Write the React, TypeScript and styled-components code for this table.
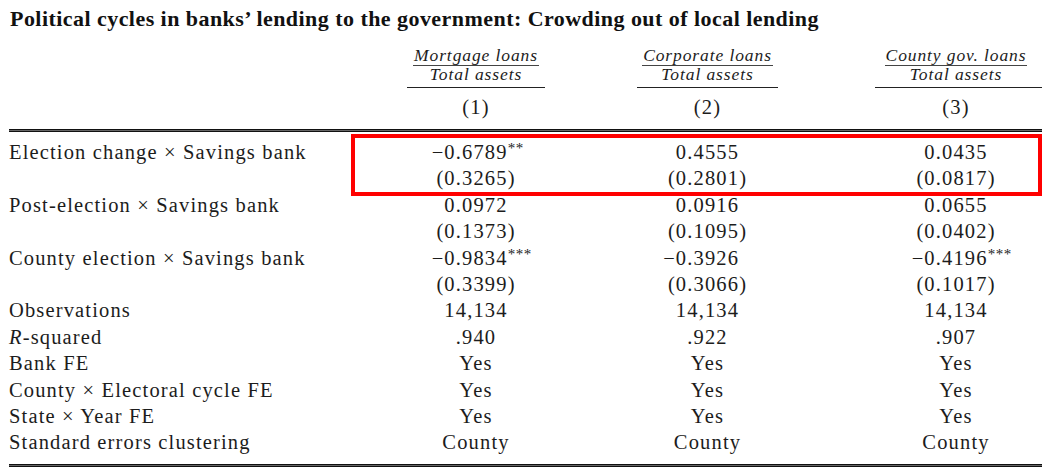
import React from "react";
import styled, { createGlobalStyle } from "styled-components";

const Global = createGlobalStyle`
  html, body { margin: 0; padding: 0; background: #ffffff; }
  body { font-family: "Liberation Serif", "Times New Roman", serif; color: #1c1c1c; }
`;

const Page = styled.div`
  width: 1051px;
  height: 472px;
  box-sizing: border-box;
  padding: 0 9px;
  overflow: hidden;
`;

const Title = styled.h1`
  margin: 6px 0 0 1px;
  font-size: 22px;
  line-height: 26px;
  font-weight: bold;
  letter-spacing: 0.45px;
  white-space: nowrap;
  color: #111;
`;

const Grid = styled.div`
  display: grid;
  grid-template-columns: 306px 138px 141px 172px;
  column-gap: 92px;
`;

const HeadGrid = styled(Grid)`
  margin-top: 13px;
`;

const HeadCell = styled.div`
  display: flex;
  flex-direction: column;
  align-items: center;
`;

const Fraction = styled.div`
  display: flex;
  flex-direction: column;
  align-items: stretch;
  font-style: italic;
  font-size: 17.5px;
  letter-spacing: 0.9px;
  text-align: center;
  white-space: nowrap;
`;

const Numer = styled.span`
  line-height: 20px;
  border-bottom: 1.5px solid #444;
  padding: 0 1px;
`;

const Denom = styled.span`
  line-height: 17px;
`;

const CMidRule = styled.div<{ $trim?: number }>`
  align-self: stretch;
  margin-top: 4px;
  margin-left: ${(p) => p.$trim ?? 0}px;
  height: 1px;
  background: #222;
`;

const ColNum = styled.div`
  margin-top: 7px;
  font-size: 20.5px;
  line-height: 24px;
  letter-spacing: 1.2px;
`;

const HeavyRule = styled.div<{ $top: number }>`
  margin-top: ${(p) => p.$top}px;
  height: 1px;
  border-top: 1px solid #111;
  border-bottom: 1px solid #111;
  background: #666;
`;

const BodyWrap = styled.div`
  position: relative;
  margin-top: 7px;
`;

const BodyGrid = styled(Grid)`
  grid-auto-rows: 26.4px;
  font-size: 20.5px;
  line-height: 26.4px;
  letter-spacing: 1.15px;
`;

const Label = styled.div`
  white-space: nowrap;
`;

const Val = styled.div`
  display: grid;
  grid-template-columns: 1fr auto 1fr;
  white-space: nowrap;
`;

const Pre = styled.span`
  text-align: right;
`;

const Stars = styled.span`
  align-self: start;
  text-align: left;
  font-size: 15px;
  line-height: 19px;
  letter-spacing: 0.5px;
`;

const Highlight = styled.div`
  position: absolute;
  left: 342px;
  top: -5px;
  width: 691px;
  height: 62px;
  box-sizing: border-box;
  border: 4px solid #ff0000;
  pointer-events: none;
`;

type Cell = { v: string; neg?: boolean; s?: string };
type Row = { label: React.ReactNode; cells: Cell[] };

const n = (v: string, neg = false, s = ""): Cell => ({ v, neg, s });

const rows: Row[] = [
  { label: "Election change \u00d7 Savings bank", cells: [n("0.6789", true, "**"), n("0.4555"), n("0.0435")] },
  { label: "", cells: [n("(0.3265)"), n("(0.2801)"), n("(0.0817)")] },
  { label: "Post-election \u00d7 Savings bank", cells: [n("0.0972"), n("0.0916"), n("0.0655")] },
  { label: "", cells: [n("(0.1373)"), n("(0.1095)"), n("(0.0402)")] },
  { label: "County election \u00d7 Savings bank", cells: [n("0.9834", true, "***"), n("0.3926", true), n("0.4196", true, "***")] },
  { label: "", cells: [n("(0.3399)"), n("(0.3066)"), n("(0.1017)")] },
  { label: "Observations", cells: [n("14,134"), n("14,134"), n("14,134")] },
  { label: <><i>R</i>-squared</>, cells: [n(".940"), n(".922"), n(".907")] },
  { label: "Bank FE", cells: [n("Yes"), n("Yes"), n("Yes")] },
  { label: "County \u00d7 Electoral cycle FE", cells: [n("Yes"), n("Yes"), n("Yes")] },
  { label: "State \u00d7 Year FE", cells: [n("Yes"), n("Yes"), n("Yes")] },
  { label: "Standard errors clustering", cells: [n("County"), n("County"), n("County")] },
];

const heads = [
  { top: "Mortgage loans", idx: "(1)", trim: 0 },
  { top: "Corporate loans", idx: "(2)", trim: 0 },
  { top: "County gov. loans", idx: "(3)", trim: 5 },
];

export default function App() {
  return (
    <>
      <Global />
      <Page>
        <Title>Political cycles in banks’ lending to the government: Crowding out of local lending</Title>
        <HeadGrid>
          <div />
          {heads.map((h) => (
            <HeadCell key={h.idx}>
              <Fraction>
                <Numer>{h.top}</Numer>
                <Denom>Total assets</Denom>
              </Fraction>
              <CMidRule $trim={h.trim} />
              <ColNum>{h.idx}</ColNum>
            </HeadCell>
          ))}
        </HeadGrid>
        <HeavyRule $top={10} />
        <BodyWrap>
          <BodyGrid>
            {rows.map((r, i) => (
              <React.Fragment key={i}>
                <Label>{r.label}</Label>
                {r.cells.map((c, j) => (
                  <Val key={j}>
                    <Pre>{c.neg ? "\u2212" : ""}</Pre>
                    <span>{c.v}</span>
                    <Stars>{c.s}</Stars>
                  </Val>
                ))}
              </React.Fragment>
            ))}
          </BodyGrid>
          <Highlight />
        </BodyWrap>
        <HeavyRule $top={8} />
      </Page>
    </>
  );
}
